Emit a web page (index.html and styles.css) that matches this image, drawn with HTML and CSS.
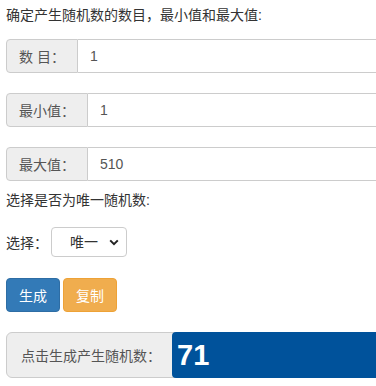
FILE: index.html
```html
<!DOCTYPE html>
<html>
<head>
    <meta charset="utf-8"/>
    <title>随机数生成</title>
    <link rel="stylesheet" href="styles.css">
</head>
<body>
<div class="page">
    <p class="tip">确定产生随机数的数目，最小值和最大值:</p>

    <div class="group">
        <span class="addon">数 目：</span>
        <input class="field" type="text" value="1"/>
    </div>
    <div class="group">
        <span class="addon">最小值：</span>
        <input class="field" type="text" value="1"/>
    </div>
    <div class="group">
        <span class="addon">最大值：</span>
        <input class="field" type="text" value="510"/>
    </div>

    <p class="tip tip-2">选择是否为唯一随机数:</p>

    <div class="choose">
        <span>选择：</span>
        <div class="select-wrap">
            <select class="select">
                <option>唯一</option>
                <option>不唯一</option>
            </select>
            <svg class="chev" width="10" height="7" viewBox="0 0 10 7"><path d="M1.2 1.4 L5 5.2 L8.8 1.4" fill="none" stroke="#222" stroke-width="2"/></svg>
        </div>
    </div>

    <div class="btns">
        <button class="btn btn-blue">生成</button>
        <button class="btn btn-orange">复制</button>
    </div>

    <div class="group group-lg">
        <span class="addon">点击生成产生随机数：</span>
        <div class="result">71</div>
    </div>
</div>
</body>
</html>
```

FILE: styles.css
```css
body, html{
    margin:0px; padding:0px;
    background:#fff;
}
.page{
    padding:5px 0 0 6px;
    font-family:"Liberation Sans","Noto Sans CJK SC",sans-serif;
    font-size:14px;
    color:#333;
    display:flex;
    flex-direction:column;
}
.tip{
    margin:0;
    line-height:20px;
}
.group{
    display:flex;
    height:34px;
    margin-top:20px;
}
.tip + .group{
    margin-top:14px;
}
.addon{
    display:flex;
    align-items:center;
    padding:0 12px;
    background:#eee;
    border:1px solid #ccc;
    border-radius:4px 0 0 4px;
    color:#555;
    white-space:nowrap;
}
.field{
    flex:1;
    border:1px solid #ccc;
    border-left:0;
    border-right:0;
    border-radius:0;
    padding:0 12px;
    font-family:"Liberation Sans",sans-serif;
    font-size:14px;
    color:#555;
    outline:none;
    min-width:0;
}
.tip-2{
    margin-top:9px;
}
.choose{
    display:flex;
    align-items:center;
    margin-top:17px;
    height:30px;
}
.choose span{
    width:45px;
}
.select-wrap{
    position:relative;
    width:76px;
    height:30px;
}
.select{
    appearance:none;
    -webkit-appearance:none;
    width:100%;
    height:100%;
    border:1px solid #ccc;
    border-radius:4px;
    background:#fff;
    padding:0 0 0 18px;
    font-family:"Liberation Sans","Noto Sans CJK SC",sans-serif;
    font-size:14px;
    color:#333;
}
.chev{
    position:absolute;
    right:8px;
    top:12px;
}
.btns{
    display:flex;
    gap:3px;
    margin-top:21px;
}
.btn{
    height:34px;
    padding:0 12px;
    border:1px solid transparent;
    border-radius:4px;
    color:#fff;
    font-family:"Liberation Sans","Noto Sans CJK SC",sans-serif;
    font-size:14px;
}
.btn-blue{
    background:#337ab7;
    border-color:#2e6da4;
}
.btn-orange{
    background:#f0ad4e;
    border-color:#eea236;
}
.group-lg{
    height:46px;
    margin-top:20px;
}
.group-lg .addon{
    padding:0 14px;
    border-radius:6px 0 0 6px;
}
.result{
    flex:1;
    display:flex;
    align-items:center;
    padding-left:5px;
    background:#00529b;
    color:#fff;
    font-family:"Liberation Sans",sans-serif;
    font-weight:bold;
    font-size:29px;
    border-radius:4px 0 0 4px;
    margin-left:-4px;
}
```
